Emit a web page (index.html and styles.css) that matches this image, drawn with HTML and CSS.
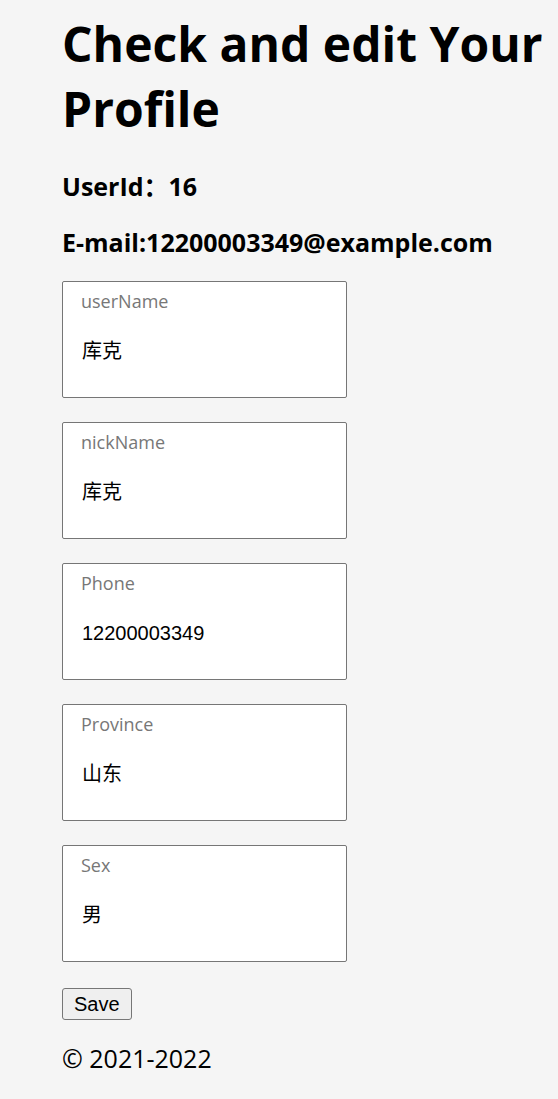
FILE: index.html
```html
<!DOCTYPE html>
<html lang="en">
<head>
<meta charset="utf-8">
<title>Profile</title>
<link rel="stylesheet" href="styles.css">
</head>
<body>
<main class="page">
  <h1 class="title">Check and edit Your Profile</h1>
  <h3 class="info info-first">UserId：16</h3>
  <h3 class="info">E-mail:12200003349@example.com</h3>
  <form class="form">
    <div class="field">
      <label class="field-label">userName</label>
      <div class="field-value">库克</div>
    </div>
    <div class="field">
      <label class="field-label">nickName</label>
      <div class="field-value">库克</div>
    </div>
    <div class="field">
      <label class="field-label">Phone</label>
      <div class="field-value">12200003349</div>
    </div>
    <div class="field">
      <label class="field-label">Province</label>
      <div class="field-value">山东</div>
    </div>
    <div class="field">
      <label class="field-label">Sex</label>
      <div class="field-value">男</div>
    </div>
    <div class="actions">
      <button type="button" class="save">Save</button>
    </div>
  </form>
  <footer class="footer">© 2021-2022</footer>
</main>
</body>
</html>
```
FILE: styles.css
```css
html, body {
  margin: 0;
  padding: 0;
  background: #f5f5f5;
}
body {
  font-family: "Open Sans", "Noto Sans CJK SC", sans-serif;
  color: #000;
}
.page {
  padding: 0 0 0 62px;
}
.title {
  margin: 11px 0 0;
  font-size: 48px;
  line-height: 65px;
  font-weight: 700;
}
.info {
  margin: 0;
  font-size: 25px;
  line-height: 56px;
  font-weight: 700;
}
.info-first {
  margin-top: 17px;
}
.form {
  display: flex;
  flex-direction: column;
  gap: 24px;
  margin-top: 11px;
}
.field {
  width: 285px;
  height: 117px;
  box-sizing: border-box;
  border: 1px solid #767676;
  border-radius: 2px;
  background: #fff;
  padding: 7px 18px 0;
  display: flex;
  flex-direction: column;
}
.field-label {
  font-size: 18px;
  line-height: 24px;
  color: #777;
}
.field-value {
  margin-top: 26px;
  padding-left: 1px;
  font-family: "Liberation Sans", "Noto Sans CJK SC", sans-serif;
  font-size: 20px;
  line-height: 24px;
  color: #000;
}
.actions {
  display: flex;
  margin-top: 2px;
}
.save {
  height: 32px;
  padding: 0 11px;
  font-family: "Liberation Sans", sans-serif;
  font-size: 20px;
  background: #efefef;
  border: 1px solid #767676;
  border-radius: 3px;
  color: #000;
}
.footer {
  margin-top: 20px;
  font-size: 25px;
  line-height: 36px;
}
```
